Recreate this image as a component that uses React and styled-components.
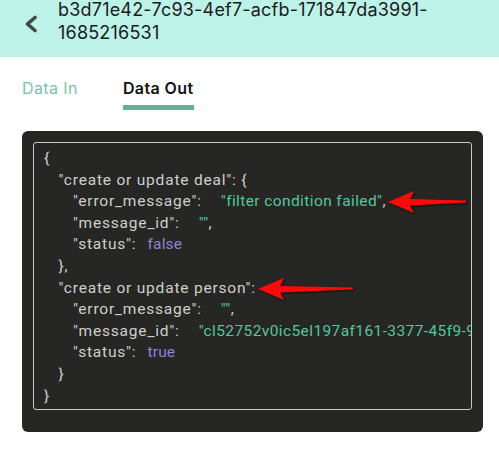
import React from "react";
import styled, { createGlobalStyle } from "styled-components";

const Global = createGlobalStyle`
  html, body { margin: 0; padding: 0; background: #fff; }
  body { font-family: "Inter", "Noto Sans", sans-serif; overflow: hidden; }
`;

const Page = styled.div`
  width: 499px;
  height: 466px;
  position: relative;
  overflow: hidden;
  background: #fff;
`;

const Header = styled.div`
  height: 57px;
  background: #bcf2e8;
  display: flex;
  align-items: flex-start;
  gap: 20px;
  padding-left: 24px;
  box-sizing: border-box;
`;

const BackButton = styled.button`
  border: none;
  background: none;
  padding: 0;
  margin-top: 15px;
  width: 14px;
  height: 18px;
  display: flex;
  cursor: pointer;
  svg { width: 14px; height: 18px; }
`;

const Title = styled.div`
  font-size: 18px;
  line-height: 23px;
  color: #1b1b1b;
  margin-top: -2px;
  letter-spacing: 0.2px;
`;

const Tabs = styled.div`
  display: flex;
  gap: 45px;
  padding: 22px 0 0 22px;
  height: 52px;
  box-sizing: border-box;
`;

const Tab = styled.div`
  font-size: 16px;
  line-height: 19px;
  letter-spacing: 0.4px;
  color: ${(p) => (p.$active ? "#111" : "#7cbfae")};
  font-weight: ${(p) => (p.$active ? 600 : 400)};
  position: relative;
  height: 31px;
  &::after {
    content: "";
    display: ${(p) => (p.$active ? "block" : "none")};
    position: absolute;
    left: 0;
    right: 0;
    bottom: 0;
    height: 5px;
    background: #5eb39a;
  }
`;

const Card = styled.div`
  margin: 22px 16px 0 22px;
  height: 301px;
  background: #262624;
  border-radius: 6px;
  padding: 11px 11px 0 11px;
  box-sizing: border-box;
`;

const CodeBox = styled.div`
  border: 1px solid #c9c9c6;
  border-radius: 3px;
  height: 268px;
  box-sizing: border-box;
  padding: 5px 0 0 10px;
  overflow: hidden;
  font-family: "Roboto", "Liberation Sans", sans-serif;
  font-size: 15.5px;
  letter-spacing: 0.8px;
  line-height: 21.6px;
  color: #cfcfcc;
`;

const Line = styled.div`
  position: relative;
  white-space: nowrap;
  padding-left: ${(p) => p.$indent * 14.5}px;
`;

const Key = styled.span`
  color: #cfcfcc;
`;

const Str = styled.span`
  color: #55c79c;
  letter-spacing: 0.4px;
  margin-left: ${(p) => p.$gap || 0}px;
`;

const Bool = styled.span`
  color: #8c85d9;
  letter-spacing: 0.2px;
  margin-left: ${(p) => p.$gap || 0}px;
`;

const Arrow = styled.svg`
  position: absolute;
  top: ${(p) => p.$top}px;
  left: ${(p) => p.$left}px;
  overflow: visible;
  filter: drop-shadow(1px 1px 1px rgba(0, 0, 0, 0.6));
`;

const RedArrow = ({ left, top, length }) => (
  <Arrow $left={left} $top={top} width={length} height={22} viewBox={`0 0 ${length} 22`}>
    <path
      d={`M0 11 L26 0 L22 8 L${length} 9.5 L${length} 11.5 L22 14.5 L26 22 Z`}
      fill="#ff0a0a"
    />
  </Arrow>
);

export default function App() {
  return (
    <Page>
      <Global />
      <Header>
        <BackButton aria-label="back">
          <svg viewBox="0 0 14 18">
            <polyline
              points="11,2.5 3.5,9 11,15.5"
              fill="none"
              stroke="#3b4a47"
              strokeWidth="3.6"
              strokeLinecap="round"
              strokeLinejoin="round"
            />
          </svg>
        </BackButton>
        <Title>
          b3d71e42-7c93-4ef7-acfb-171847da3991-
          <br />
          1685216531
        </Title>
      </Header>
      <Tabs>
        <Tab>Data In</Tab>
        <Tab $active>Data Out</Tab>
      </Tabs>
      <Card>
        <CodeBox>
          <Line $indent={0}>{"{"}</Line>
          <Line $indent={1}>
            <Key>"create or update deal"</Key>: {"{"}
          </Line>
          <Line $indent={2}>
            <Key>"error_message"</Key>:<Str $gap={19}>"filter condition failed"</Str>,
            <RedArrow left={344} top={0} length={78} />
          </Line>
          <Line $indent={2}>
            <Key>"message_id"</Key>:<Str $gap={19}>""</Str>,
          </Line>
          <Line $indent={2}>
            <Key>"status"</Key>:<Bool $gap={11}>false</Bool>
          </Line>
          <Line $indent={1}>{"},"}</Line>
          <Line $indent={1}>
            <Key>"create or update person"</Key>:
            <RedArrow left={214} top={0} length={95} />
          </Line>
          <Line $indent={2}>
            <Key>"error_message"</Key>:<Str $gap={19}>""</Str>,
          </Line>
          <Line $indent={2}>
            <Key>"message_id"</Key>:<Str $gap={19}>"cl52752v0ic5el197af161-3377-45f9-9c1e-7a3b"</Str>
          </Line>
          <Line $indent={2}>
            <Key>"status"</Key>:<Bool $gap={11}>true</Bool>
          </Line>
          <Line $indent={1}>{"}"}</Line>
          <Line $indent={0}>{"}"}</Line>
        </CodeBox>
      </Card>
    </Page>
  );
}
